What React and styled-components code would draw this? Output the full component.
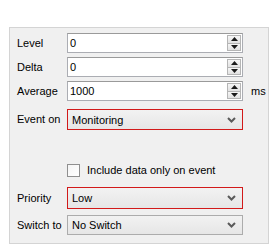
import React from "react";
import styled, { createGlobalStyle } from "styled-components";

const Global = createGlobalStyle`
  html, body { margin: 0; padding: 0; background: #ffffff; }
  body { font-family: "Liberation Sans", Arial, sans-serif; font-size: 11px; color: #000; }
`;

const Page = styled.div`
  width: 279px;
  height: 248px;
  padding: 27px 0 0 9px;
  box-sizing: border-box;
`;

const Panel = styled.div`
  width: 260px;
  height: 217px;
  box-sizing: border-box;
  background: #f0f0f0;
  border: 1px solid #d4d4d4;
  padding: 5px 0 0 7px;
  display: flex;
  flex-direction: column;
`;

const Row = styled.div`
  display: flex;
  align-items: center;
  height: ${(p) => p.$h || 20}px;
  margin-top: ${(p) => p.$mt || 0}px;
`;

const Label = styled.div`
  width: 50px;
  flex: none;
  line-height: 13px;
`;

const InputBox = styled.div`
  position: relative;
  width: 176px;
  height: 20px;
  box-sizing: border-box;
  background: #fff;
  border: 1px solid #abadb3;
  border-top-color: #9a9a9a;
  display: flex;
  align-items: center;
  padding-left: 2px;
`;

const Spinner = styled.div`
  position: absolute;
  right: 1px;
  top: 1px;
  width: 14px;
  height: 16px;
  display: flex;
  flex-direction: column;
`;

const SpinBtn = styled.div`
  flex: 1;
  box-sizing: border-box;
  border: 1px solid #b5b5b5;
  background: linear-gradient(#f6f6f6, #e2e2e2);
  display: flex;
  align-items: center;
  justify-content: center;
  & + & { border-top: none; }
`;

const Unit = styled.div`
  margin-left: 8px;
`;

const Select = styled.div`
  width: 176px;
  height: ${(p) => p.$h || 21}px;
  box-sizing: border-box;
  border: 1px solid ${(p) => (p.$error ? "#d21a1a" : "#acacac")};
  background: linear-gradient(#f2f2f2, #e6e6e6);
  display: flex;
  align-items: center;
  padding: 0 6px 0 4px;
  justify-content: space-between;
`;

const CheckRow = styled.div`
  display: flex;
  align-items: center;
  margin-top: 33px;
  margin-left: 50px;
  height: 14px;
`;

const Box = styled.div`
  width: 13px;
  height: 13px;
  box-sizing: border-box;
  border: 1px solid #8f8f8f;
  background: linear-gradient(135deg, #f4f4f4, #ffffff);
  margin-right: 7px;
`;

const Up = () => (
  <svg width="7" height="4" viewBox="0 0 7 4"><path d="M0 4 L3.5 0 L7 4 Z" fill="#1a1a1a" /></svg>
);
const Down = () => (
  <svg width="7" height="4" viewBox="0 0 7 4"><path d="M0 0 L3.5 4 L7 0 Z" fill="#1a1a1a" /></svg>
);
const Chevron = () => (
  <svg width="9" height="6" viewBox="0 0 9 6">
    <path d="M1 1 L4.5 4.5 L8 1" stroke="#5a5a5a" strokeWidth="2" fill="none" />
  </svg>
);

const NumField = ({ label, value, unit, mt }) => (
  <Row $mt={mt}>
    <Label>{label}</Label>
    <InputBox>
      {value}
      <Spinner>
        <SpinBtn><Up /></SpinBtn>
        <SpinBtn><Down /></SpinBtn>
      </Spinner>
    </InputBox>
    {unit && <Unit>{unit}</Unit>}
  </Row>
);

const SelField = ({ label, value, error, mt, h }) => (
  <Row $mt={mt} $h={h || 21}>
    <Label>{label}</Label>
    <Select $error={error} $h={h}>
      <span>{value}</span>
      <Chevron />
    </Select>
  </Row>
);

export default function App() {
  return (
    <>
      <Global />
      <Page>
        <Panel>
          <NumField label="Level" value="0" />
          <NumField label="Delta" value="0" mt={4} />
          <NumField label="Average" value="1000" unit="ms" mt={4} />
          <SelField label="Event on" value="Monitoring" error mt={8} />
          <CheckRow>
            <Box />
            <span>Include data only on event</span>
          </CheckRow>
          <SelField label="Priority" value="Low" error mt={10} h={22} />
          <SelField label="Switch to" value="No Switch" mt={6} h={20} />
        </Panel>
      </Page>
    </>
  );
}
